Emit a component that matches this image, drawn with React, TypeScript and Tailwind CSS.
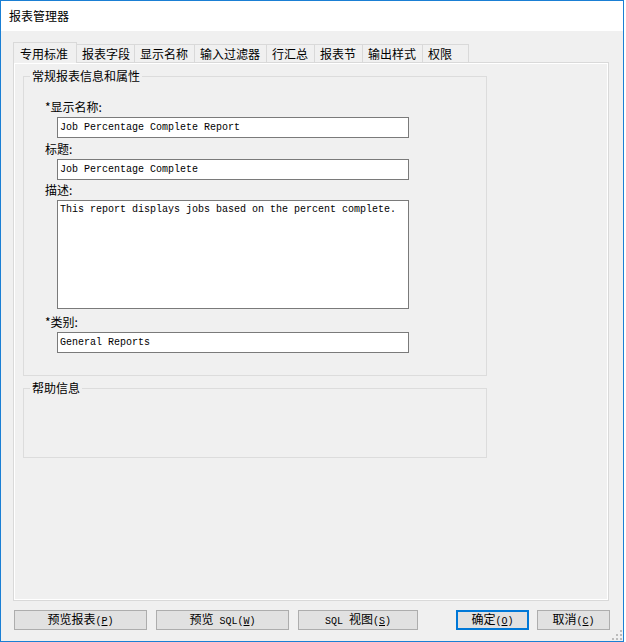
import React from "react";

const tabs = [
  { label: "报表字段", w: "w-[58px]" },
  { label: "显示名称", w: "w-[60px]" },
  { label: "输入过滤器", w: "w-[72px]" },
  { label: "行汇总", w: "w-[48px]" },
  { label: "报表节", w: "w-[48px]" },
  { label: "输出样式", w: "w-[60px]" },
  { label: "权限", w: "w-[46px]" },
];

const Mono = ({ children }: { children: React.ReactNode }) => (
  <span className="font-['Liberation_Mono',monospace] text-[10px]">{children}</span>
);

const Btn = ({
  className,
  primary,
  children,
}: {
  className: string;
  primary?: boolean;
  children: React.ReactNode;
}) => (
  <div
    className={
      primary
        ? `${className} h-[20px] flex items-center justify-center bg-[#e1e1e1] border-2 border-[#0078d7]`
        : `${className} h-[20px] flex items-center justify-center bg-[#e1e1e1] border border-[#adadad]`
    }
  >
    <span className="leading-[14px]">{children}</span>
  </div>
);

const Field = ({ value }: { value: string }) => (
  <div className="ml-[12px] w-[352px] h-[21px] border border-[#7a7a7a] bg-white flex items-center pl-[2px] font-['Liberation_Mono',monospace] text-[10px] whitespace-pre">
    {value}
  </div>
);

export default function App() {
  return (
    <div className="w-[624px] h-[642px] border border-[#1a7fd4] flex flex-col bg-[#f0f0f0] text-[12px] text-black font-['Noto_Sans_CJK_SC',sans-serif]">
      {/* title bar */}
      <div className="h-[30px] bg-white flex items-center pl-[8px] shrink-0">报表管理器</div>

      <div className="relative flex-1 flex flex-col px-[12px] pt-[11px]">
        {/* tab strip */}
        <div className="flex items-end h-[20px]">
          <div className="relative z-10 -mb-px w-[64px] h-[21px] border-l border-t border-r border-[#d9d9d9] bg-[#f0f0f0] flex items-center pl-[6px] pt-[1px]">
            专用标准
          </div>
          {tabs.map((t) => (
            <div
              key={t.label}
              className={`${t.w} h-[18px] border-t border-r border-[#d9d9d9] flex items-center pl-[5px]`}
            >
              {t.label}
            </div>
          ))}
        </div>

        {/* tab panel */}
        <div className="w-[596px] h-[539px] border border-[#d9d9d9] shadow-[inset_0_0_0_1px_#ffffff] pl-[9px] pt-[5px]">
          <fieldset className="w-[464px] h-[308px] border border-[#dcdcdc]">
            <legend className="ml-[6px] px-[2px] leading-[16px]">常规报表信息和属性</legend>
            <div className="pl-[21px]">
              <div className="mt-[12px] h-[21px] flex items-center">*显示名称:</div>
              <Field value="Job Percentage Complete Report" />
              <div className="h-[21px] flex items-center">标题:</div>
              <Field value="Job Percentage Complete" />
              <div className="h-[20px] flex items-center">描述:</div>
              <div className="ml-[12px] w-[352px] h-[109px] border border-[#7a7a7a] bg-white pl-[2px] pt-[2px] leading-[14px] font-['Liberation_Mono',monospace] text-[10px]">
                This report displays jobs based on the percent complete.
              </div>
              <div className="h-[23px] flex items-center pt-[2px]">*类别:</div>
              <Field value="General Reports" />
            </div>
          </fieldset>

          <fieldset className="mt-[4px] w-[464px] h-[78px] border border-[#dcdcdc]">
            <legend className="ml-[6px] px-[2px] leading-[16px]">帮助信息</legend>
          </fieldset>
        </div>

        {/* buttons */}
        <div className="flex mt-[9px]">
          <Btn className="ml-[1px] w-[133px]">
            预览报表<Mono>(<span className="underline">P</span>)</Mono>
          </Btn>
          <Btn className="ml-[9px] w-[133px]">
            预览<Mono> SQL(<span className="underline">W</span>)</Mono>
          </Btn>
          <Btn className="ml-[9px] w-[120px]">
            <Mono>SQL </Mono>视图<Mono>(<span className="underline">S</span>)</Mono>
          </Btn>
          <Btn primary className="ml-[38px] w-[73px]">
            确定<Mono>(<span className="underline">O</span>)</Mono>
          </Btn>
          <Btn className="ml-[8px] w-[73px]">
            取消<Mono>(<span className="underline">C</span>)</Mono>
          </Btn>
        </div>

        {/* resize grip */}
        <svg className="absolute right-[1px] bottom-[1px]" width="10" height="10" viewBox="0 0 10 10">
          <g fill="#bcbcbc">
            <rect x="8" y="0" width="2" height="2" />
            <rect x="4" y="4" width="2" height="2" />
            <rect x="8" y="4" width="2" height="2" />
            <rect x="0" y="8" width="2" height="2" />
            <rect x="4" y="8" width="2" height="2" />
            <rect x="8" y="8" width="2" height="2" />
          </g>
        </svg>
      </div>
    </div>
  );
}
